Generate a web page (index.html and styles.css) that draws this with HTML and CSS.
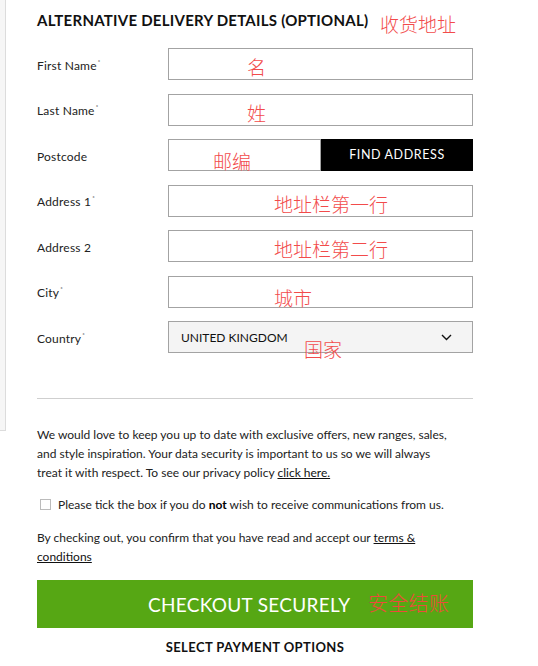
FILE: index.html
```html
<!DOCTYPE html>
<html>
<head>
<meta charset="utf-8">
<link rel="stylesheet" href="styles.css">
</head>
<body>
<div class="sidebar"></div>
<main class="main">
  <div class="head-row">
    <h2 class="heading">ALTERNATIVE DELIVERY DETAILS (OPTIONAL)</h2>
    <span class="note note-head">收货地址</span>
  </div>
  <div class="form">
    <label class="label">First Name<sup>*</sup></label>
    <div class="field"><div class="input"></div><span class="note n-first">名</span></div>

    <label class="label">Last Name<sup>*</sup></label>
    <div class="field"><div class="input"></div><span class="note n-last">姓</span></div>

    <label class="label">Postcode</label>
    <div class="field postcode"><div class="input"></div><button class="find">FIND ADDRESS</button><span class="note n-post">邮编</span></div>

    <label class="label">Address 1<sup>*</sup></label>
    <div class="field"><div class="input"></div><span class="note n-addr">地址栏第一行</span></div>

    <label class="label">Address 2</label>
    <div class="field"><div class="input"></div><span class="note n-addr">地址栏第二行</span></div>

    <label class="label">City<sup>*</sup></label>
    <div class="field"><div class="input"></div><span class="note n-city">城市</span></div>

    <label class="label">Country<sup>*</sup></label>
    <div class="field"><div class="input select"><span>UNITED KINGDOM</span>
      <svg width="11" height="7" viewBox="0 0 11 7"><path d="M1 1 L5.5 5.5 L10 1" fill="none" stroke="#111" stroke-width="1.4"/></svg>
    </div><span class="note n-country">国家</span></div>
  </div>
  <hr class="divider">
  <p class="text intro">We would love to keep you up to date with exclusive offers, new ranges, sales, and style inspiration. Your data security is important to us so we will always treat it with respect. To see our privacy policy <a class="link">click here.</a></p>
  <div class="check-row"><span class="box"></span><span>Please tick the box if you do <b>not</b> wish to receive communications from us.</span></div>
  <p class="text terms">By checking out, you confirm that you have read and accept our <a class="link">terms &amp; conditions</a></p>
  <div class="checkout"><span>CHECKOUT SECURELY</span><span class="note n-check">安全结账</span></div>
  <div class="payment">SELECT PAYMENT OPTIONS</div>
</main>
</body>
</html>
```
FILE: styles.css
```css
* { box-sizing: border-box; }
html, body { margin: 0; padding: 0; background: #fff; }
body {
  display: flex;
  align-items: flex-start;
  font-family: Lato, "Liberation Sans", sans-serif;
  color: #1a1a1a;
  width: 538px;
  height: 666px;
  overflow: hidden;
}
.sidebar {
  width: 6px;
  height: 431px;
  background: #f6f6f6;
  border-right: 1px solid #dcdcdc;
  border-bottom: 1px solid #dcdcdc;
  flex: none;
}
.main {
  margin-left: 31px;
  width: 436px;
  display: flex;
  flex-direction: column;
}
.head-row { position: relative; height: 48px; }
.heading {
  margin: 0;
  padding-top: 10px;
  font-size: 15px;
  line-height: 20px;
  font-weight: 700;
  letter-spacing: 0.25px;
  color: #111;
}
.note {
  position: absolute;
  font-family: "Noto Sans CJK SC", sans-serif;
  font-size: 19px;
  line-height: 20px;
  color: #f24b4b;
  white-space: nowrap;
  font-weight: 300;
}
.note-head { left: 343px; top: 14px; }
.form {
  display: grid;
  grid-template-columns: 131px 305px;
  row-gap: 13.5px;
  align-items: center;
}
.label {
  font-size: 12px;
  color: #222;
  letter-spacing: 0.2px;
  position: relative;
  top: 1px;
}
.label sup { font-size: 6px; vertical-align: 6px; margin-left: 1px; }
.field { position: relative; display: flex; height: 32px; }
.input {
  flex: 1;
  height: 32px;
  border: 1px solid #a3a3a3;
  background: #fff;
}
.find {
  width: 152px;
  height: 32px;
  border: none;
  background: #000;
  color: #fff;
  font-family: Lato, "Liberation Sans", sans-serif;
  font-size: 12.5px;
  letter-spacing: 0.6px;
  padding: 0 0 2px 0;
}
.select {
  background: #f4f4f4;
  display: flex;
  align-items: center;
  justify-content: space-between;
  padding: 0 20px 0 12px;
  font-size: 12px;
  color: #111;
}
.n-first { left: 79px; top: 9px; }
.n-last { left: 79px; top: 9px; }
.n-post { left: 45px; top: 12px; }
.n-addr { left: 106px; top: 9px; }
.n-city { left: 106px; top: 12px; }
.n-country { left: 136px; top: 18px; }
.divider {
  margin: 45px 0 0 0;
  border: none;
  border-top: 1px solid #cfcfcf;
  height: 0;
}
.text {
  margin: 26px 0 0 0;
  font-size: 12px;
  line-height: 19px;
  color: #222;
}
.intro { max-width: 415px; }
.link { color: #111; text-decoration: underline; }
.check-row {
  display: flex;
  align-items: center;
  margin-top: 15px;
  font-size: 12px;
  color: #222;
  padding-left: 3px;
}
.check-row b { color: #000; }
.box {
  width: 11px;
  height: 11px;
  border: 1px solid #bbb;
  margin-right: 7px;
  flex: none;
}
.terms { margin-top: 16px; }
.checkout {
  position: relative;
  margin-top: 14px;
  height: 48px;
  background: #56a714;
  color: #fff;
  font-size: 19px;
  letter-spacing: 0.3px;
  display: flex;
  align-items: center;
  padding-left: 111px;
}
.n-check { left: 331px; top: 13px; font-size: 20px; color: #ee4a3a; }
.payment {
  text-align: center;
  font-size: 13px;
  font-weight: 700;
  letter-spacing: 0.4px;
  margin-top: 11px;
  color: #111;
}
```
